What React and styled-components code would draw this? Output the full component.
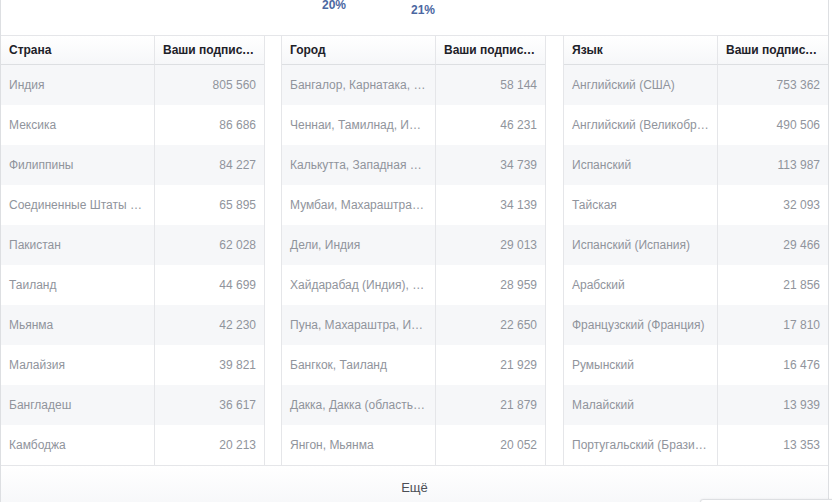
import React from 'react'
import styled, { createGlobalStyle } from 'styled-components'

const GlobalStyle = createGlobalStyle`
  html, body {
    margin: 0;
    padding: 0;
    background: #fff;
    font-family: "Liberation Sans", Arial, Helvetica, sans-serif;
  }
`

const countries = [
  ['Индия', '805 560'],
  ['Мексика', '86 686'],
  ['Филиппины', '84 227'],
  ['Соединенные Штаты Америки', '65 895'],
  ['Пакистан', '62 028'],
  ['Таиланд', '44 699'],
  ['Мьянма', '42 230'],
  ['Малайзия', '39 821'],
  ['Бангладеш', '36 617'],
  ['Камбоджа', '20 213'],
]

const cities = [
  ['Бангалор, Карнатака, Индия', '58 144'],
  ['Ченнаи, Тамилнад, Индия', '46 231'],
  ['Калькутта, Западная Бенгалия, Индия', '34 739'],
  ['Мумбаи, Махараштра, Индия', '34 139'],
  ['Дели, Индия', '29 013'],
  ['Хайдарабад (Индия), Телангана, Индия', '28 959'],
  ['Пуна, Махараштра, Индия', '22 650'],
  ['Бангкок, Таиланд', '21 929'],
  ['Дакка, Дакка (область), Бангладеш', '21 879'],
  ['Янгон, Мьянма', '20 052'],
]

const languages = [
  ['Английский (США)', '753 362'],
  ['Английский (Великобритания)', '490 506'],
  ['Испанский', '113 987'],
  ['Тайская', '32 093'],
  ['Испанский (Испания)', '29 466'],
  ['Арабский', '21 856'],
  ['Французский (Франция)', '17 810'],
  ['Румынский', '16 476'],
  ['Малайский', '13 939'],
  ['Португальский (Бразилия)', '13 353'],
]

const tables = [
  { title: 'Страна', rows: countries, width: '264px', offset: 0, border: 'right' },
  { title: 'Город', rows: cities, width: '265px', offset: 16, border: 'both' },
  { title: 'Язык', rows: languages, width: 'auto', offset: 17, border: 'left' },
]

function App() {
  return (
    <>
      <GlobalStyle />
      <Card>
        <ChartStrip>
          <svg width="827" height="35">
            <text x="321" y="9" fill="#4b67a1" fontSize="12" fontWeight="bold" fontFamily="Liberation Sans, Arial, sans-serif">20%</text>
            <text x="410" y="14" fill="#4b67a1" fontSize="12" fontWeight="bold" fontFamily="Liberation Sans, Arial, sans-serif">21%</text>
          </svg>
        </ChartStrip>
        <TablesRow>
          {tables.map(t => (
            <Table key={t.title} $width={t.width} $offset={t.offset} $border={t.border}>
              <HeadCell>{t.title}</HeadCell>
              <HeadCell $num>Ваши подписчики</HeadCell>
              {t.rows.map(([name, value], i) => (
                <React.Fragment key={name}>
                  <Cell $odd={i % 2 === 0}>{name}</Cell>
                  <Cell $odd={i % 2 === 0} $num>{value}</Cell>
                </React.Fragment>
              ))}
            </Table>
          ))}
        </TablesRow>
        <MoreButton>Ещё</MoreButton>
      </Card>
      <DockTab />
    </>
  )
}

export default App

const Card = styled.div`
  width: 827px;
  height: 502px;
  border-left: 1px solid #dddfe2;
  border-right: 1px solid #dddfe2;
  background: #fff;
  overflow: hidden;
`

const ChartStrip = styled.div`
  height: 35px;
  svg {
    display: block;
  }
`

const TablesRow = styled.div`
  display: flex;
  border-top: 1px solid #e5e6e9;
  border-bottom: 1px solid #e5e6e9;
`

const Table = styled.div`
  width: ${p => p.$width};
  flex: ${p => (p.$width === 'auto' ? '1' : 'none')};
  margin-left: ${p => p.$offset}px;
  display: grid;
  grid-template-columns: 153px 1fr;
  grid-auto-rows: 40px;
  grid-template-rows: 29px;
  box-sizing: border-box;
  border-left: ${p => (p.$border !== 'right' ? '1px solid #e5e6e9' : 'none')};
  border-right: ${p => (p.$border !== 'left' ? '1px solid #e5e6e9' : 'none')};
`

const HeadCell = styled.div`
  box-sizing: border-box;
  padding: 0 8px;
  line-height: 28px;
  font-size: 12px;
  font-weight: bold;
  color: #1d2129;
  white-space: nowrap;
  overflow: hidden;
  text-overflow: ellipsis;
  text-align: ${p => (p.$num ? 'right' : 'left')};
  background: linear-gradient(#ffffff, #f6f7f9);
  border-bottom: 1px solid #dddfe2;
  border-left: ${p => (p.$num ? '1px solid #e5e6e9' : 'none')};
`

const Cell = styled.div`
  box-sizing: border-box;
  padding: 0 8px;
  line-height: 40px;
  font-size: 12px;
  color: #90949c;
  white-space: nowrap;
  overflow: hidden;
  text-overflow: ellipsis;
  text-align: ${p => (p.$num ? 'right' : 'left')};
  background: ${p => (p.$odd ? '#f6f7f9' : '#ffffff')};
  border-left: ${p => (p.$num ? '1px solid #e5e6e9' : 'none')};
`

const MoreButton = styled.div`
  height: 42px;
  display: flex;
  align-items: center;
  justify-content: center;
  font-size: 13px;
  color: #4b4f56;
  background: linear-gradient(#ffffff, #f6f7f9);
`

const DockTab = styled.div`
  position: fixed;
  left: 700px;
  top: 499px;
  width: 160px;
  height: 30px;
  background: #fff;
  border: 1px solid #dddfe2;
  border-radius: 3px;
  box-shadow: 0 0 2px rgba(0, 0, 0, 0.08);
`
